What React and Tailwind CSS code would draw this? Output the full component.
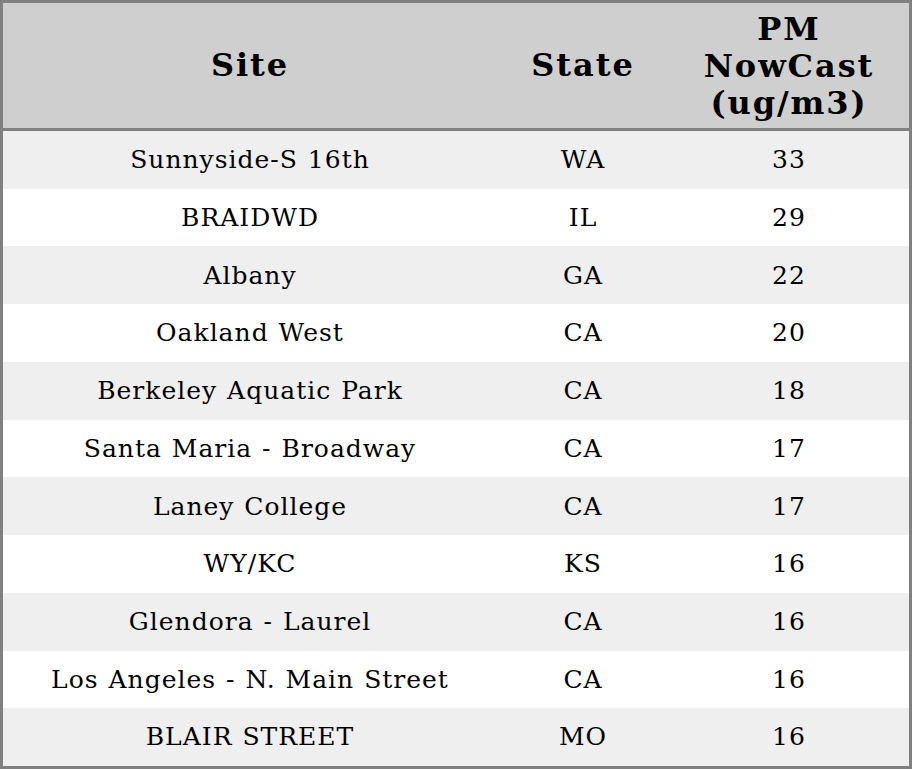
import React from "react";

const rows = [
  ["Sunnyside-S 16th", "WA", "33"],
  ["BRAIDWD", "IL", "29"],
  ["Albany", "GA", "22"],
  ["Oakland West", "CA", "20"],
  ["Berkeley Aquatic Park", "CA", "18"],
  ["Santa Maria - Broadway", "CA", "17"],
  ["Laney College", "CA", "17"],
  ["WY/KC", "KS", "16"],
  ["Glendora - Laurel", "CA", "16"],
  ["Los Angeles - N. Main Street", "CA", "16"],
  ["BLAIR STREET", "MO", "16"],
];

export default function App() {
  return (
    <div className="h-[769px] w-[912px] border-[3px] border-[#808080] bg-white font-['DejaVu_Serif',serif] text-black flex flex-col">
      <div className="grid h-[128px] shrink-0 grid-cols-[494px_172px_240px] border-b-[3px] border-[#808080] bg-[#cfcfcf] text-[32px] font-bold leading-[37px] tracking-[0.06em]">
        <div className="flex items-center justify-center text-center">Site</div>
        <div className="flex items-center justify-center text-center">State</div>
        <div className="flex items-center justify-center pt-[2px] text-center">
          PM
          <br />
          NowCast
          <br />
          (ug/m3)
        </div>
      </div>
      <div className="flex flex-1 flex-col text-[25px] tracking-[0.04em] [word-spacing:1px]">
        {rows.map((r, i) => (
          <div
            key={i}
            className={`grid flex-1 grid-cols-[494px_172px_240px] items-center text-center ${i % 2 === 0 ? "bg-[#efefef]" : "bg-white"}`}
          >
            <div>{r[0]}</div>
            <div>{r[1]}</div>
            <div>{r[2]}</div>
          </div>
        ))}
      </div>
    </div>
  );
}
